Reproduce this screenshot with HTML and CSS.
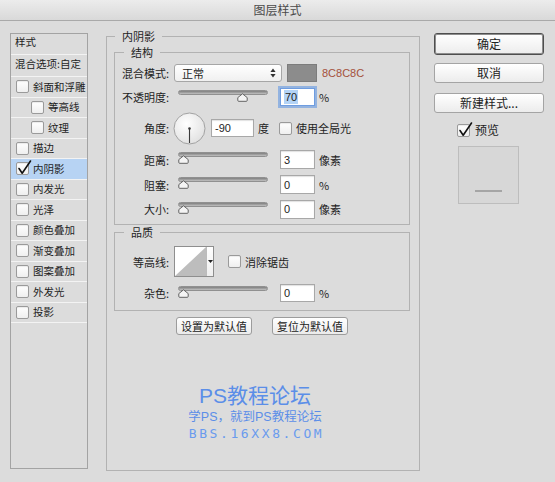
FILE: index.html
```html
<!DOCTYPE html>
<html lang="zh-CN">
<head>
<meta charset="utf-8">
<title>图层样式</title>
<link rel="stylesheet" href="styles.css">
</head>
<body>
<div class="dialog">
  <header class="titlebar">图层样式</header>
  <div class="content">
    <aside class="styles-panel">
      <div class="sp-row sp-head">样式</div>
      <div class="sp-row sp-blend">混合选项:自定</div>
      <div class="sp-row"><span class="cb"></span>斜面和浮雕</div>
      <div class="sp-row sp-sub"><span class="cb"></span>等高线</div>
      <div class="sp-row sp-sub"><span class="cb"></span>纹理</div>
      <div class="sp-row"><span class="cb"></span>描边</div>
      <div class="sp-row sp-active"><span class="cb"><svg class="check" viewBox="0 0 17 16"><path d="M4 8.5 L7.2 13.2 L15.5 1"/></svg></span>内阴影</div>
      <div class="sp-row"><span class="cb"></span>内发光</div>
      <div class="sp-row"><span class="cb"></span>光泽</div>
      <div class="sp-row"><span class="cb"></span>颜色叠加</div>
      <div class="sp-row"><span class="cb"></span>渐变叠加</div>
      <div class="sp-row"><span class="cb"></span>图案叠加</div>
      <div class="sp-row"><span class="cb"></span>外发光</div>
      <div class="sp-row"><span class="cb"></span>投影</div>
    </aside>

    <main class="settings">
      <fieldset class="group outer">
        <legend>内阴影</legend>

        <fieldset class="group inner struct">
          <legend>结构</legend>
          <div class="form form-struct">
            <div class="row">
              <span class="lbl">混合模式:</span>
              <div class="select">正常<svg class="sel-arrows" viewBox="0 0 6 10"><path d="M3 0.5 L5.6 4 H0.4Z M3 9.5 L5.6 6 H0.4Z"/></svg></div>
              <span class="swatch"></span>
              <span class="hex">8C8C8C</span>
            </div>
            <div class="row">
              <span class="lbl">不透明度:</span>
              <div class="slider"><span class="track"></span><svg class="thumb" style="left:59px" viewBox="0 0 11 9"><path d="M5.5 0.8 L10.2 4.6 V7.4 Q10.2 8.3 9.3 8.3 H1.7 Q0.8 8.3 0.8 7.4 V4.6 Z"/></svg></div>
              <span class="num focus"><span class="sel">70</span></span>
              <span class="unit">%</span>
            </div>
            <div class="row">
              <span class="lbl">角度:</span>
              <svg class="dial" viewBox="0 0 33 33"><defs><radialGradient id="dg" cx="40%" cy="35%" r="75%"><stop offset="0" stop-color="#ffffff"/><stop offset="1" stop-color="#dedede"/></radialGradient></defs><circle cx="16.5" cy="16.5" r="15.5" fill="url(#dg)" stroke="#a2a2a2"/><line x1="16.5" y1="16.5" x2="16.5" y2="31" stroke="#3a3a3a" stroke-width="1.1"/><circle cx="16.5" cy="16.5" r="1.3" fill="#3a3a3a"/></svg>
              <span class="num num-wide">-90</span>
              <span class="unit">度</span>
              <span class="cb cb-gap"></span>
              <span class="cb-label">使用全局光</span>
            </div>
            <div class="row">
              <span class="lbl">距离:</span>
              <div class="slider"><span class="track"></span><svg class="thumb" style="left:0px" viewBox="0 0 11 9"><path d="M5.5 0.8 L10.2 4.6 V7.4 Q10.2 8.3 9.3 8.3 H1.7 Q0.8 8.3 0.8 7.4 V4.6 Z"/></svg></div>
              <span class="num">3</span>
              <span class="unit">像素</span>
            </div>
            <div class="row">
              <span class="lbl">阻塞:</span>
              <div class="slider"><span class="track"></span><svg class="thumb" style="left:0px" viewBox="0 0 11 9"><path d="M5.5 0.8 L10.2 4.6 V7.4 Q10.2 8.3 9.3 8.3 H1.7 Q0.8 8.3 0.8 7.4 V4.6 Z"/></svg></div>
              <span class="num">0</span>
              <span class="unit">%</span>
            </div>
            <div class="row">
              <span class="lbl">大小:</span>
              <div class="slider"><span class="track"></span><svg class="thumb" style="left:0px" viewBox="0 0 11 9"><path d="M5.5 0.8 L10.2 4.6 V7.4 Q10.2 8.3 9.3 8.3 H1.7 Q0.8 8.3 0.8 7.4 V4.6 Z"/></svg></div>
              <span class="num">0</span>
              <span class="unit">像素</span>
            </div>
          </div>
        </fieldset>

        <fieldset class="group inner quality">
          <legend>品质</legend>
          <div class="form form-quality">
            <div class="row">
              <span class="lbl">等高线:</span>
              <div class="contour">
                <svg class="contour-curve" viewBox="0 0 31 29" preserveAspectRatio="none"><path d="M0 29 L31 0 V29 Z"/></svg>
                <span class="contour-drop"><svg viewBox="0 0 5 3"><path d="M0 0 H5 L2.5 3Z"/></svg></span>
              </div>
              <span class="cb cb-gap2"></span>
              <span class="cb-label">消除锯齿</span>
            </div>
            <div class="row">
              <span class="lbl">杂色:</span>
              <div class="slider"><span class="track"></span><svg class="thumb" style="left:0px" viewBox="0 0 11 9"><path d="M5.5 0.8 L10.2 4.6 V7.4 Q10.2 8.3 9.3 8.3 H1.7 Q0.8 8.3 0.8 7.4 V4.6 Z"/></svg></div>
              <span class="num">0</span>
              <span class="unit">%</span>
            </div>
          </div>
        </fieldset>

        <div class="defaults">
          <button class="btn-sm">设置为默认值</button>
          <button class="btn-sm">复位为默认值</button>
        </div>

        <div class="watermark">
          <div class="wm1">PS教程论坛</div>
          <div class="wm2">学PS，就到PS教程论坛</div>
          <div class="wm3">BBS.16XX8.COM</div>
        </div>
      </fieldset>
    </main>

    <aside class="actions">
      <button class="btn btn-default">确定</button>
      <button class="btn btn-cancel">取消</button>
      <button class="btn btn-new">新建样式...</button>
      <div class="preview-check"><span class="cb"><svg class="check" viewBox="0 0 17 16"><path d="M4 8.5 L7.2 13.2 L15.5 1"/></svg></span>预览</div>
      <div class="preview"><span class="dash"></span></div>
    </aside>
  </div>
</div>
</body>
</html>
```
FILE: styles.css
```css
* { box-sizing: border-box; }
html, body { margin: 0; padding: 0; }
body {
  width: 555px;
  height: 482px;
  overflow: hidden;
  background: #dcdcdc;
  font-family: "Noto Sans CJK SC", "Liberation Sans", sans-serif;
  font-size: 11px;
  line-height: 14px;
  color: #1e1e1e;
}
.dialog { width: 555px; height: 482px; display: flex; flex-direction: column; }

.titlebar {
  height: 21px;
  border-bottom: 1px solid #a9a9a9;
  background: linear-gradient(#ececec, #d9d9d9);
  text-align: center;
  font-size: 12px;
  line-height: 20px;
  color: #4a4a4a;
}

.content { display: flex; align-items: flex-start; padding: 8px 0 0 10px; }

/* left styles list */
.styles-panel {
  width: 78px;
  height: 436px;
  margin-top: 4px;
  border: 1px solid #a3a3a3;
  flex: none;
  font-size: 10.5px;
  overflow: hidden;
}
.sp-row {
  display: flex;
  align-items: center;
  height: 20.5px;
  border-bottom: 1px solid #f3f3f3;
  padding-left: 5px;
  white-space: nowrap;
}
.sp-head { height: 21px; padding-left: 4px; padding-bottom: 4px; }
.sp-blend { height: 22px; padding-left: 4px; padding-bottom: 3px; }
.sp-sub { padding-left: 20px; }
.sp-active { background: #b7d3f3; }

.cb {
  position: relative;
  flex: none;
  width: 13px;
  height: 13px;
  margin-right: 4px;
  border: 1px solid #9a9a9a;
  border-radius: 2px;
  background: linear-gradient(#ffffff, #efefef);
  box-shadow: inset 0 1px 1px rgba(0,0,0,0.08);
}
.check {
  position: absolute;
  left: -2px;
  top: -3px;
  width: 17px;
  height: 16px;
  overflow: visible;
}
.check path { fill: none; stroke: #111; stroke-width: 1.6; stroke-linejoin: round; stroke-linecap: round; }

/* middle */
.settings { margin-left: 18px; flex: none; }
fieldset.group {
  margin: 0;
  border: 1px solid #b2b2b2;
  min-width: 0;
}
fieldset.group legend {
  padding: 0 7px;
  line-height: 14px;
  font-size: 11px;
}
.outer {
  width: 314px;
  height: 442px;
  padding: 2px 9px 0 7px;
}
.outer > legend { margin-left: 1px; }
.inner { width: 296px; padding: 5px 0 6px 8px; }
.inner > legend { margin-left: 1px; }
.quality { margin-top: 6px; padding-top: 7px; padding-bottom: 8px; }

.form { display: grid; row-gap: 6px; }
.form-struct { grid-template-rows: 18px 18px 32px 19px 19px 18px; }
.form-quality { grid-template-rows: 31px 18px; row-gap: 7px; }
.row { display: flex; align-items: center; white-space: nowrap; }
.lbl {
  flex: none;
  width: 46px;
  margin-right: 5px;
  display: flex;
  justify-content: flex-end;
  white-space: nowrap;
}

.select {
  width: 108px;
  height: 18px;
  border: 1px solid #a6a6a6;
  border-radius: 3px;
  background: linear-gradient(#ffffff, #f0f0f0);
  display: flex;
  align-items: center;
  justify-content: space-between;
  padding: 0 5px 0 7px;
}
.sel-arrows { width: 6px; height: 10px; }
.sel-arrows path { fill: #333; }
.swatch {
  width: 30px;
  height: 18px;
  margin-left: 5px;
  background: #8c8c8c;
  border: 1px solid #7c7c7c;
}
.hex {
  margin-left: 5px;
  color: #a4513b;
  font-family: "Liberation Sans", sans-serif;
  font-size: 11px;
}

.slider {
  position: relative;
  flex: none;
  width: 90px;
  height: 12px;
  margin-left: 4px;
  align-self: flex-start;
  margin-top: 2px;
}
.track {
  position: absolute;
  left: 0;
  right: 0;
  top: 0;
  height: 5px;
  border-radius: 3px;
  background: linear-gradient(#7f7f7f, #ababab 70%, #c4c4c4);
  border: 1px solid #909090;
}
.thumb {
  position: absolute;
  top: 3px;
  width: 11px;
  height: 9px;
}
.thumb path { fill: #f4f4f4; stroke: #545454; stroke-width: 0.9; }

.num {
  flex: none;
  width: 35px;
  height: 18px;
  margin-left: 12px;
  background: #fff;
  border: 1px solid #a8a8a8;
  box-shadow: inset 0 1px 1px rgba(0,0,0,0.12);
  font-family: "Liberation Sans", sans-serif;
  font-size: 11px;
  display: flex;
  align-items: center;
  padding-left: 3px;
}
.form-struct .row:nth-child(n+4) .num { height: 19px; }
.num.focus {
  border-color: #6f9de0;
  box-shadow: 0 0 0 2px rgba(108,156,226,0.65);
}
.sel { background: #b3d3f6; padding: 0 1px; }
.num-wide { width: 43px; margin-left: 5px; }
.unit { margin-left: 4px; }

.dial { flex: none; width: 33px; height: 33px; margin-left: -1px; }

.cb-gap { margin-left: 10px; }
.cb-gap2 { margin-left: 14px; }
.cb-label { margin-left: 0; }

.contour {
  flex: none;
  width: 40px;
  height: 31px;
  border: 1px solid #8e8e8e;
  background: #fff;
  display: flex;
}
.contour-curve { width: 31px; height: 29px; display: block; }
.contour-curve path { fill: #bdbdbd; }
.contour-drop {
  flex: 1;
  border-left: 1px solid #bcbcbc;
  display: flex;
  align-items: center;
  justify-content: center;
  background: linear-gradient(#fff, #efefef);
}
.contour-drop svg { width: 5px; height: 3px; }
.contour-drop path { fill: #222; }

.defaults {
  display: flex;
  justify-content: center;
  gap: 20px;
  margin-top: 6px;
}
.btn-sm {
  width: 76px;
  height: 18px;
  padding: 0;
  border: 1px solid #9c9c9c;
  border-radius: 3px;
  background: linear-gradient(#ffffff, #ebebeb);
  font-family: "Noto Sans CJK SC", sans-serif;
  font-size: 11px;
  line-height: 16px;
  color: #222;
}

.watermark {
  margin-top: 49px;
  padding-right: 14px;
  text-align: center;
  color: #5b8ee8;
  font-family: "Liberation Sans", "Noto Sans CJK SC", sans-serif;
}
.wm1 { font-size: 21px; line-height: 24px; }
.wm2 { font-size: 12.5px; line-height: 17px; margin-top: 1px; }
.wm3 {
  font-family: "DejaVu Sans Mono", monospace;
  font-size: 13px;
  line-height: 16px;
  letter-spacing: 2.6px;
  color: #6a9bee;
  padding-left: 3px;
}

/* right column */
.actions {
  flex: none;
  width: 110px;
  margin-left: 14px;
  margin-top: 4px;
  display: flex;
  flex-direction: column;
}
.btn {
  width: 110px;
  height: 20px;
  padding: 0;
  border: 1px solid #a4a4a4;
  border-radius: 3px;
  background: linear-gradient(#ffffff, #ececec);
  font-family: "Noto Sans CJK SC", sans-serif;
  font-size: 12px;
  line-height: 18px;
  color: #222;
}
.btn-default {
  height: 22px;
  border: 1px solid #4e4e4e;
  box-shadow: inset 0 0 0 1px #8d8d8d;
}
.btn-cancel { margin-top: 8px; }
.btn-new { margin-top: 10px; }
.preview-check {
  display: flex;
  align-items: center;
  height: 14px;
  margin-top: 10px;
  padding-left: 23px;
  font-size: 12px;
}
.preview-check .cb { margin-right: 5px; }
.preview {
  width: 61px;
  height: 58px;
  margin-top: 9px;
  margin-left: 24px;
  border: 1px solid #bdbdbd;
  background: #d7d7d7;
  display: flex;
  justify-content: center;
}
.dash {
  width: 27px;
  height: 2px;
  margin-top: 43px;
  background: #a5a5a5;
}
```
